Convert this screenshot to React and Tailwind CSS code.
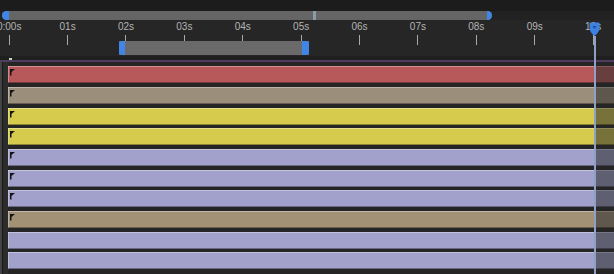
import React from "react";

const labels = ["0:00s", "01s", "02s", "03s", "04s", "05s", "06s", "07s", "08s", "09s", "10s"];

const rows = [
  { h: "h-[21px]", bar: "bg-[#b7585a]", tri: true },
  { h: "h-[21px]", bar: "bg-[#9b8e7a]", tri: true },
  { h: "h-[20px]", bar: "bg-[#d6cb4c]", tri: true },
  { h: "h-[21px]", bar: "bg-[#d6cb4c]", tri: true },
  { h: "h-[21px]", bar: "bg-[#a1a1cb]", tri: true },
  { h: "h-[20px]", bar: "bg-[#a1a1cb]", tri: true },
  { h: "h-[21px]", bar: "bg-[#a1a1cb]", tri: true },
  { h: "h-[21px]", bar: "bg-[#a39176]", tri: true },
  { h: "h-[20px]", bar: "bg-[#a1a1cb]", tri: false },
  { h: "h-[22px]", bar: "bg-[#a1a1cb]", tri: false },
];

function Track({ row }) {
  return (
    <div className={`${row.h} shrink-0 flex flex-col`}>
      <div className={`h-[17px] flex ${row.bar}`}>
        <div className="relative flex-1 shadow-[inset_0_1px_0_rgba(255,255,255,0.35),inset_0_-1px_0_rgba(0,0,0,0.35),inset_1px_0_0_rgba(255,255,255,0.3)]">
          {row.tri && (
            <svg className="absolute left-[2px] top-[3px]" width="6" height="7" viewBox="0 0 6 7">
              <polygon points="0,0 5,0 1.5,3 1.5,6.5 0,6.5" fill="#151515" />
            </svg>
          )}
        </div>
        <div className="w-[18px] bg-[#2a2a2a]/55 shadow-[inset_0_1px_0_rgba(255,255,255,0.15),inset_0_-1px_0_rgba(0,0,0,0.35)]" />
      </div>
    </div>
  );
}

export default function App() {
  return (
    <div className="relative w-[614px] h-[274px] overflow-hidden bg-[#1d1d1d] flex flex-col font-['Liberation_Sans',sans-serif]">
      {/* top strip */}
      <div className="h-[11px] shrink-0 bg-[#1c1c1c]" />
      {/* scrollbar */}
      <div className="h-[9px] shrink-0 bg-[#222222] flex">
        <div className="relative ml-[2px] w-[490px] h-[9px] bg-[#656565] rounded-full">
          <div className="absolute left-0 top-0 w-[7px] h-[9px] rounded-l-full bg-[#3f86e6]" />
          <div className="absolute right-0 top-0 w-[5px] h-[9px] rounded-r-full bg-[#3f86e6]" />
          <div className="absolute left-[311px] top-0 w-[3px] h-[9px] bg-[#8c9ba8]" />
        </div>
      </div>
      {/* ruler */}
      <div className="relative h-[36px] shrink-0 bg-[#262626]">
        <div className="flex ml-[-20px] pt-[1px]">
          {labels.map((l) => (
            <div key={l} className="w-[58.4px] shrink-0 flex flex-col items-center">
              <div className="h-[12px] leading-[12px] text-[10px] text-[#b4b4b4] whitespace-nowrap">{l}</div>
              <div className="mt-[2px] w-[1px] h-[10px] bg-[#a8a8a8]" />
            </div>
          ))}
        </div>
        {/* work area */}
        <div className="absolute left-[119px] top-[21px] w-[190px] h-[14px] bg-[#6a6a6a] flex justify-between">
          <div className="w-[6px] h-[14px] rounded-l-[3px] bg-[#3f86e6]" />
          <div className="w-[7px] h-[14px] rounded-r-[3px] bg-[#3f86e6]" />
        </div>
      </div>
      {/* separator */}
      <div className="h-[4px] shrink-0 bg-[#1f1f1f] flex items-end">
        <div className="ml-[9px] w-[3px] h-[2px] bg-[#c4d8bc]" />
      </div>
      <div className="h-[2px] shrink-0 bg-[#4e3d5e]" />
      {/* tracks */}
      <div className="flex-1 flex bg-[#262426]">
        <div className="w-[8px] shrink-0 flex bg-[#2c2c2c]">
          <div className="w-[2px] bg-[#444444]" />
          <div className="w-[1px] bg-[#1a1a1a]" />
        </div>
        <div className="flex-1 flex flex-col pt-[4px] bg-[#252525]">
          {rows.map((r, i) => (
            <Track key={i} row={r} />
          ))}
        </div>
      </div>
      {/* playhead */}
      <div className="absolute left-[594px] top-[36px] bottom-0 w-[1.5px] bg-[#8ea0c4]" />
      <svg className="absolute left-[589px] top-[22px]" width="11" height="15" viewBox="0 0 11 15">
        <path d="M0.5 1.5 Q0.5 0.5 1.5 0.5 L9.5 0.5 Q10.5 0.5 10.5 1.5 L10.5 6 Q10.5 10 5.5 14 Q0.5 10 0.5 6 Z" fill="#3c82e2" />
        <path d="M3.5 4 L7.5 4 L5.5 7 Z" fill="#1e4f96" />
      </svg>
    </div>
  );
}
